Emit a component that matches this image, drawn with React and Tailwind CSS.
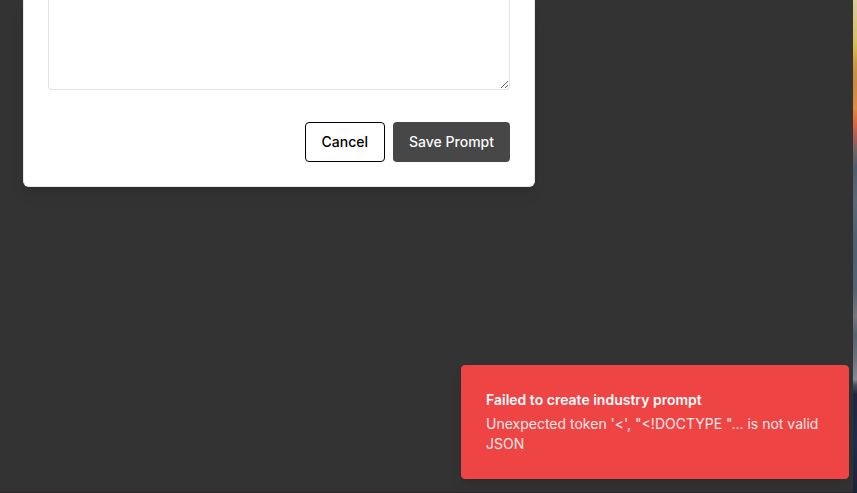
function PromptDialog() {
  return (
    <form
      role="dialog"
      aria-label="Industry prompt"
      className="ml-[23px] flex w-full max-w-lg flex-col gap-8 rounded-b-md border border-t-0 border-gray-200 bg-white px-6 pb-6 shadow-lg"
    >
      <textarea
        aria-label="Prompt"
        className="block h-[90px] w-full resize rounded-b border border-t-0 border-[#e2e2e2] bg-white px-3 text-sm outline-none"
      />
      <div className="flex justify-end gap-2">
        <button
          type="button"
          className="h-10 rounded border border-black bg-white px-4 text-sm font-medium text-black"
        >
          Cancel
        </button>
        <button
          type="button"
          className="h-10 rounded bg-[#474747] px-4 text-sm font-medium text-gray-50"
        >
          Save Prompt
        </button>
      </div>
    </form>
  );
}

function ErrorToast() {
  return (
    <div
      role="alert"
      className="absolute right-2 bottom-3.5 flex w-[388px] flex-col gap-1 rounded border border-[#ef4444] bg-[#ef4444] p-6 text-sm text-gray-50 shadow-lg"
    >
      <p className="font-semibold">Failed to create industry prompt</p>
      <p className="opacity-90">
        Unexpected token '&lt;', "&lt;!DOCTYPE "... is not valid JSON
      </p>
    </div>
  );
}

export default function App() {
  return (
    <div className="relative flex min-h-screen w-full overflow-hidden bg-[#333333] font-['Inter',sans-serif]">
      <main className="flex flex-1 flex-col items-start border-b border-[#292526]">
        <PromptDialog />
      </main>
      <div
        aria-hidden="true"
        className="w-1 bg-[linear-gradient(to_bottom,#dfcb96_0%,#d8bf68_8%,#d9b64d_10%,#d09543_13%,#c98b42_17%,#dc8d3c_22%,#d9673f_25%,#a85f55_28%,#6d6468_31%,#4e5d6b_34%,#596873_41%,#4d6070_49%,#526370_59%,#77777b_64%,#536270_68%,#6d737b_73%,#858b91_77%,#4d5662_78%,#1e2940_80%,#202e4c_90%,#1b2338_100%)]"
      />
      <ErrorToast />
    </div>
  );
}
